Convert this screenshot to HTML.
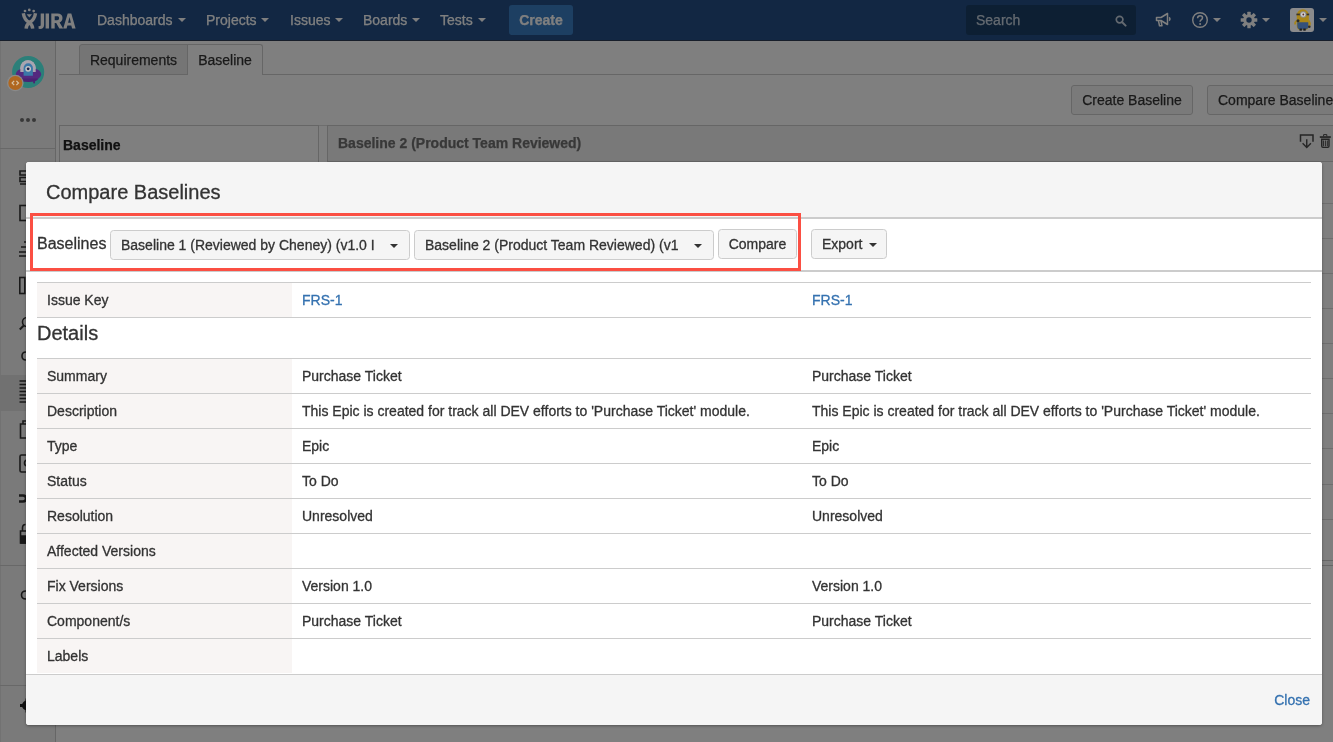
<!DOCTYPE html>
<html>
<head>
<meta charset="utf-8">
<title>Compare Baselines</title>
<style>
*{box-sizing:border-box;margin:0;padding:0}
html,body{width:1333px;height:742px;overflow:hidden;background:#fff;font-family:"Liberation Sans",sans-serif;font-size:14px;color:#333}
#page{position:absolute;left:0;top:0;width:1333px;height:742px;overflow:hidden;background:#fff}
/* ---------- top nav ---------- */
#nav{-webkit-text-stroke:.25px;will-change:transform;position:absolute;left:0;top:0;width:1333px;height:41px;background:#244f86;border-bottom:1px solid #2e3d54}
#nav .item{position:absolute;top:0;height:40px;line-height:40px;color:#fff;font-size:14px;white-space:nowrap}
#nav .caret{position:absolute;top:18px;width:0;height:0;border-left:4px solid transparent;border-right:4px solid transparent;border-top:4px solid #fff}
#create{position:absolute;left:509px;top:5px;width:64px;height:30px;border-radius:3px;background:#3b7fc4;color:#fff;font-weight:bold;font-size:14px;line-height:30px;text-align:center}
#search{position:absolute;left:966px;top:5px;width:170px;height:30px;border-radius:3px;background:#1a3f66;color:#c8d3e0;font-size:14px;line-height:30px;padding-left:10px}
/* ---------- sidebar ---------- */
#side{will-change:transform;position:absolute;left:0;top:41px;width:56px;height:701px;background:#f5f5f5;border-right:1px solid #ccc}
/* ---------- content ---------- */
#content{-webkit-text-stroke:.25px;will-change:transform;position:absolute;left:56px;top:41px;width:1277px;height:701px;background:#fff;z-index:0;overflow:hidden}

#side .dot{position:absolute;top:77px;width:4px;height:4px;border-radius:2px;background:#707070}
#side .sline{position:absolute;left:0;width:55px;height:1px;background:#d0d0d0}
#side .ssel{position:absolute;left:0;top:334px;width:55px;height:36px;background:#e2e2e2}
#content .tab{position:absolute;border:1px solid #ccc;font-size:14px;line-height:30px;text-align:center;color:#333;white-space:nowrap}
#content .bbtn{position:absolute;top:44px;height:30px;border:1px solid #ccc;border-radius:3px;background:#f5f5f5;font-size:14px;line-height:28px;text-align:center;color:#333;white-space:nowrap}
#lpanel{position:absolute;left:3px;top:84px;width:260px;height:441px;border:1px solid #ccc;background:#fff}
#rpanel{position:absolute;left:271px;top:84px;width:1010px;height:441px;border:1px solid #ccc;background:#fff;
  background-image:linear-gradient(#ddd,#ddd),linear-gradient(#ddd,#ddd),linear-gradient(#ddd,#ddd),linear-gradient(#ddd,#ddd),linear-gradient(#ddd,#ddd),linear-gradient(#ddd,#ddd),linear-gradient(#ddd,#ddd),linear-gradient(#ddd,#ddd),linear-gradient(#ddd,#ddd),linear-gradient(#ddd,#ddd),linear-gradient(#ccc,#ccc),linear-gradient(#ccc,#ccc);
  background-repeat:no-repeat;background-size:100% 1px;
  background-position:0 77px,0 112px,0 147px,0 182px,0 217px,0 252px,0 287px,0 322px,0 358px,0 393px,0 434px,0 439px}
#rhead{position:absolute;left:0;top:0;width:1008px;height:36px;background:#f2f2f2;border-bottom:1px solid #ccc}
/* ---------- blanket ---------- */
#blanket{z-index:5;position:absolute;left:0;top:0;width:1333px;height:742px;background:rgba(0,0,0,.5)}
/* ---------- dialog ---------- */
#dlg{-webkit-text-stroke:.3px;will-change:transform;z-index:6;position:absolute;left:26px;top:162px;width:1296px;height:563px;background:#fff;border-radius:3px;overflow:hidden;box-shadow:0 1px 3px rgba(0,0,0,.35)}
#dlg .hd{position:absolute;left:0;top:0;width:100%;height:57px;background:#f5f5f5;border-bottom:2px solid #ccc}
#dlg .hd h2{position:absolute;left:20px;top:16px;font-size:20px;font-weight:normal;color:#333;line-height:28px}
#dlg .ft{position:absolute;left:0;top:512px;width:100%;height:51px;background:#f5f5f5;border-top:1px solid #ccc}

#dlg .tb{position:absolute;left:0;top:57px;width:100%;height:53px;background:#fff;border-bottom:2px solid #ccc}
#dlg .lbl{position:absolute;left:11px;top:15px;font-size:16px;line-height:20px;color:#333}
#dlg .sel,#dlg .btn{position:absolute;top:11px;height:30px;border:1px solid #ccc;border-radius:3.5px;background:#f5f5f5;font-size:14px;line-height:28px;color:#333;white-space:nowrap;overflow:hidden}
#dlg .sel{width:300px;padding-left:10px}
#dlg .btn{text-align:center;top:10px}
#dlg .sel i{position:absolute;left:279px;top:13px;width:0;height:0;border-left:4px solid transparent;border-right:4px solid transparent;border-top:4px solid #333}
#dlg .btn i{position:absolute;left:57px;top:13px;width:0;height:0;border-left:4px solid transparent;border-right:4px solid transparent;border-top:4px solid #333}
#dlg .red{position:absolute;left:4px;top:51px;width:771px;height:58px;border:3px solid #fb4f43}
#dlg .row{position:absolute;left:11px;width:1274px;height:35px;border-bottom:1px solid #ccc;font-size:14px;line-height:34px;color:#333;white-space:nowrap}
#dlg .row.first{height:36px;border-top:1px solid #ccc}
#dlg .row .k{position:absolute;left:0;top:0;width:255px;height:34px;background:#f8f5f4;padding-left:10px}
#dlg .row .v{position:absolute;top:0;height:34px;width:509px;padding-left:10px}
#dlg .row .v:nth-child(2){left:255px}
#dlg .row .v:nth-child(3){left:765px}
#dlg .row .a{color:#3572b0}
#dlg .row.last{border-bottom:0}
#dlg .h3{position:absolute;left:11px;top:158px;font-size:20px;line-height:26px;color:#333}
#dlg .ft span{position:absolute;right:12px;top:16px;font-size:14px;line-height:18px;color:#3572b0}
</style>
</head>
<body>
<div id="page">
  <div id="nav">
    <svg id="logo" width="90" height="41" viewBox="0 0 90 41" style="position:absolute;left:0;top:0">
      <g fill="#fff">
        <circle cx="25" cy="11" r="1.35"/><circle cx="29.3" cy="9.9" r="1.35"/><circle cx="33.7" cy="11.1" r="1.35"/>
        <path d="M26.6 14.2h5.4l-2.7 3.3z"/>
        <path d="M40.7 13.5h3.4v11.2c0 2.8-1.5 4.2-4.2 4.2-.5 0-.9 0-1.3-.1v-2.7c.3.1.6.1.9.1.9 0 1.2-.5 1.2-1.6z"/>
        <path d="M45.6 13.5h3.4v15h-3.4z"/>
        <path fill-rule="evenodd" d="M51.3 13.5h6.2c3.2 0 5 1.6 5 4.6 0 2.2-1.1 3.7-2.9 4.3l3.6 6.1h-3.9l-3.1-5.6h-1.5v5.6h-3.4zM54.7 16.3v3.9h2.4c1.3 0 2-.7 2-2s-.7-1.9-2-1.9z"/>
        <path fill-rule="evenodd" d="M67.7 13.5h3.6l4.3 15h-3.5l-.8-3.1h-3.9l-.8 3.1h-3.4zM69.5 17l-1.4 5.7h2.8z"/>
      </g>
      <g fill="none" stroke="#fff" stroke-width="3.4">
        <path d="M23.3 13.3Q24.3 20 29.4 22.6Q32.6 25 32.7 28.6"/>
        <path d="M35.5 13.3Q34.5 20 29.4 22.6Q26.2 25 26.1 28.6"/>
      </g>
    </svg>
    <div class="item" style="left:97px">Dashboards</div><div class="caret" style="left:178px"></div>
    <div class="item" style="left:206px">Projects</div><div class="caret" style="left:261px"></div>
    <div class="item" style="left:290px">Issues</div><div class="caret" style="left:335px"></div>
    <div class="item" style="left:363px">Boards</div><div class="caret" style="left:412px"></div>
    <div class="item" style="left:440px">Tests</div><div class="caret" style="left:478px"></div>
    <div id="create">Create</div>
    <div id="search">Search
      <svg width="12" height="12" viewBox="0 0 12 12" style="position:absolute;left:149px;top:10px"><circle cx="4.6" cy="4.6" r="3.3" fill="none" stroke="#c8d3e0" stroke-width="1.7"/><path d="M7.2 7.2L10.6 10.6" stroke="#c8d3e0" stroke-width="2" stroke-linecap="round"/></svg>
    </div>
    <!-- megaphone -->
    <svg width="18" height="18" viewBox="0 0 18 18" style="position:absolute;left:1155px;top:11px"><g fill="none" stroke="#fff" stroke-width="1.5" stroke-linejoin="round"><path d="M1.5 6.5h4.5l6.5-4v11l-6.500-4h-4.500z"/><path d="M3.500 9.800l1 5h2.500l-1-5"/><path d="M14.300 6.200q1.400 1.800 0 3.600"/></g></svg>
    <!-- help -->
    <svg width="18" height="18" viewBox="0 0 18 18" style="position:absolute;left:1191px;top:11px"><circle cx="9" cy="9" r="7.300" fill="none" stroke="#fff" stroke-width="1.400"/><path d="M6.600 7.200q0-2.500 2.500-2.500q2.400 0 2.400 2.100q0 1.200-1.300 2q-1.100.700-1.100 1.900" fill="none" stroke="#fff" stroke-width="1.500"/><circle cx="9.100" cy="13" r="1" fill="#fff"/></svg>
    <div class="caret" style="left:1213px"></div>
    <!-- gear -->
    <svg width="18" height="18" viewBox="-9 -9 18 18" style="position:absolute;left:1240px;top:11px"><g fill="#fff"><rect x="-1.700" y="-8.300" width="3.400" height="16.600" rx=".5"/><rect x="-1.700" y="-8.300" width="3.400" height="16.600" rx=".5" transform="rotate(45)"/><rect x="-1.700" y="-8.300" width="3.400" height="16.600" rx=".5" transform="rotate(90)"/><rect x="-1.700" y="-8.300" width="3.400" height="16.600" rx=".5" transform="rotate(135)"/><circle r="5.800"/></g><circle r="2.700" fill="#244f86"/></svg>
    <div class="caret" style="left:1262px"></div>
    <!-- avatar drawn above blanket -->
    <div class="caret" style="left:1319px"></div>
  </div>
  <div id="side">
    <div style="position:absolute;left:0;top:0;width:1px;height:701px;background:#e4e4e4"></div>
    <!-- project avatar drawn above blanket -->
    <div class="dot" style="left:20px"></div><div class="dot" style="left:26px"></div><div class="dot" style="left:32px"></div>
    <div class="sline" style="top:107px"></div>
    <div class="ssel"></div>
    <div class="sline" style="top:524px"></div>
    <div class="sline" style="top:644px"></div>
    <svg id="sicons" width="56" height="701" viewBox="0 41 56 701" style="position:absolute;left:0;top:0">
      <g fill="none" stroke="#333" stroke-width="1.600">
        <!-- tree -->
        <path d="M20 171h8v4h-8zM20 177.500h8v4h-8zM20 184h8v-4"/>
        <!-- page -->
        <rect x="20" y="205.500" width="12" height="15"/>
        <!-- ship -->
        <path d="M19 252h16M21 247h12v5M24 242h6v5M19 256h16"/>
        <!-- board -->
        <rect x="19.800" y="277.500" width="5" height="16"/><rect x="27.800" y="277.500" width="5" height="10"/>
        <!-- search -->
        <circle cx="27" cy="322" r="4.500"/><path d="M23.800 325.500l-4 4" stroke-width="2"/>
        <!-- link -->
        <path d="M26 352q-4 0 -4 4t4 4"/>
        <!-- list (selected) -->
        <path d="M19.500 381h12M19.500 384.500h12M19.500 388h12M19.500 391.500h12M19.500 395h12M19.500 398.500h12M19.500 402h12" stroke-width="1.300"/>
        <!-- clip -->
        <path d="M20.500 424h10v14h-10zM23 424v-3h5v3"/>
        <!-- calendar -->
        <rect x="20" y="455" width="13" height="17" rx="1.500"/><circle cx="27.500" cy="463" r="3"/>
        <!-- shuffle -->
        <path d="M19 495.500h4q3 0 3 3v0q0 3 -3 3h-4" stroke-width="2.400"/>
        <!-- lock -->
        <path d="M20.500 531h10v12h-10zM22.500 531v-3q0 -3.500 3 -3.500"/>
        <path d="M21 536h9v7h-9z" fill="#333"/>
        <!-- add shortcut -->
        <path d="M26 591q-4.500 0 -4.500 4t4.500 4"/>
      </g>
      <!-- gear -->
      <g fill="#222"><circle cx="27" cy="705.500" r="5"/><rect x="25.500" y="698.500" width="3" height="14"/><rect x="20" y="704" width="14" height="3"/></g>
    </svg>
  </div>
  <div id="content">
    <div class="tab" style="left:23px;top:3px;width:109px;height:31px;background:#ebebeb;border-radius:3px 0 0 0">Requirements</div>
    <div class="tab" style="left:131px;top:3px;width:76px;height:31px;background:#fff;border-bottom:0;border-radius:0 3px 0 0;z-index:2">Baseline</div>
    <div style="position:absolute;left:3px;top:33px;width:1274px;height:1px;background:#ccc"></div>
    <div class="bbtn" style="left:1015px;width:122px">Create Baseline</div>
    <div class="bbtn" style="left:1151px;width:140px;text-align:left;padding-left:10px">Compare Baseline</div>
    <div style="position:absolute;left:3px;top:84px;width:1274px;height:1px;background:#ddd"></div>
    <div id="lpanel"><div style="position:absolute;left:3px;top:11px;font-weight:bold;font-size:14px;line-height:16px;color:#222">Baseline</div></div>
    <div id="rpanel">
      <div id="rhead"><span style="position:absolute;left:10px;top:9px;font-weight:bold;font-size:14px;line-height:16px;color:#707070;white-space:nowrap">Baseline 2 (Product Team Reviewed)</span>
        <svg width="36" height="18" viewBox="0 0 36 18" style="position:absolute;left:970px;top:7px"><g fill="none" stroke="#4a4a4a"><path d="M2.500 8.800V2H15V8.800" stroke-width="1.500"/><path d="M8.750 6.200V14M4.600 10.300l4.150 4.100l4.150 -4.100" stroke-width="1.400"/><path d="M25.600 3.400V1.600h3.200V3.400" stroke-width="1"/><path d="M23.700 6.300h7.300v6.800q0 1.300 -1.300 1.300h-4.700q-1.300 0 -1.300 -1.300z" stroke-width="1.400"/><path d="M25.400 7.500v5.800M27.350 7.500v5.800M29.300 7.500v5.800" stroke-width="1"/></g><rect x="21.800" y="3.200" width="11" height="1.700" fill="#4a4a4a"/></svg>
      </div>
    </div>
  </div>
  <div id="blanket"></div>
  <!-- project avatar (direct colours) : svg origin = page (4,50) -->
  <svg width="48" height="46" viewBox="4 50 48 46" style="position:absolute;left:4px;top:50px;z-index:5">
    <circle cx="28.150" cy="72" r="16.050" fill="#2b7f79"/>
    <path d="M20.300 76V67.900a7.700 7.700 0 0 1 15.400 0V76z" fill="#a9a5b0"/>
    <ellipse cx="28.450" cy="74.300" rx="12.700" ry="6.700" fill="#54297f"/>
    <path d="M18.500 78.500h20q-1.500 3.600 -10 3.600t-10 -3.600z" fill="#4a2273"/>
    <rect x="33.200" y="80" width="1.800" height="3.500" rx=".8" fill="#4a2273"/>
    <path d="M20.300 72V67.900a7.700 7.700 0 0 1 15.400 0V72z" fill="#a9a5b0"/>
    <path d="M23.600 75.800V68a4.650 4.650 0 0 1 9.300 0v7.800z" fill="#3b78a8"/>
    <circle cx="28.150" cy="68.800" r="2.900" fill="#c4c4c4"/>
    <circle cx="28.150" cy="68.800" r="1.400" fill="#1b2350"/>
    <circle cx="15.300" cy="83" r="8.300" fill="#8a8a8a"/>
    <circle cx="15.300" cy="83" r="7" fill="#b0671f"/>
    <path d="M14.200 80.900l-2.100 2.100l2.100 2.100M16.400 80.900l2.100 2.100l-2.100 2.100" fill="none" stroke="#d8c4a6" stroke-width="1.200"/>
  </svg>
  <!-- user avatar (direct colours) : svg origin = page (1290,8) -->
  <svg width="24" height="24" viewBox="0 0 24 24" style="position:absolute;left:1290px;top:8px;z-index:5">
    <rect width="24" height="24" rx="3" fill="#8b8b8c"/>
    <path d="M6.800 18V7.300a6 6 0 0 1 12 0V18q0 4 -4 4h-4q-4 0 -4 -4z" fill="#a98618"/>
    <path d="M7.300 14.200h11V18q0 3.600 -3.600 3.600h-3.800q-3.600 0 -3.600 -3.600z" fill="#34517a"/>
    <rect x="6.400" y="5.600" width="12.800" height="1.700" fill="#3a3428"/>
    <circle cx="13.200" cy="6.500" r="3.300" fill="#8d8d8d"/>
    <circle cx="13.200" cy="6.500" r="2.300" fill="#d2d2d2"/>
    <circle cx="13.300" cy="6.500" r=".900" fill="#5a2a22"/>
    <path d="M6.800 12.500q-2 1.500 -1.800 4M18.800 12.500q1.500 2 1 5" fill="none" stroke="#a98618" stroke-width="1.700"/>
    <circle cx="8" cy="12.700" r="1.500" fill="#2a2a2a"/><circle cx="19.300" cy="18.800" r="1.300" fill="#2a2a2a"/>
    <rect x="9.500" y="20.500" width="2.400" height="2.200" fill="#1c1c1c"/><rect x="13.300" y="20.500" width="2.400" height="2.200" fill="#1c1c1c"/>
  </svg>
  <div id="dlg">
    <div class="hd"><h2>Compare Baselines</h2></div>
    <div class="tb">
      <div class="lbl">Baselines</div>
      <div class="sel" style="left:84px">Baseline 1 (Reviewed by Cheney) (v1.0 I<i></i></div>
      <div class="sel" style="left:388px">Baseline 2 (Product Team Reviewed) (v1<i></i></div>
      <div class="btn" style="left:692px;width:79px">Compare</div>
      <div class="btn" style="left:785px;width:76px;text-align:left;padding-left:10px">Export<i></i></div>
    </div>
    <div class="red"></div>
    <div class="row first" style="top:120px"><div class="k">Issue Key</div><div class="v a">FRS-1</div><div class="v a">FRS-1</div></div>
    <div class="h3">Details</div>
    <div class="row first" style="top:196px"><div class="k">Summary</div><div class="v">Purchase Ticket</div><div class="v">Purchase Ticket</div></div>
    <div class="row" style="top:232px"><div class="k">Description</div><div class="v">This Epic is created for track all DEV efforts to 'Purchase Ticket' module.</div><div class="v">This Epic is created for track all DEV efforts to 'Purchase Ticket' module.</div></div>
    <div class="row" style="top:267px"><div class="k">Type</div><div class="v">Epic</div><div class="v">Epic</div></div>
    <div class="row" style="top:302px"><div class="k">Status</div><div class="v">To Do</div><div class="v">To Do</div></div>
    <div class="row" style="top:337px"><div class="k">Resolution</div><div class="v">Unresolved</div><div class="v">Unresolved</div></div>
    <div class="row" style="top:372px"><div class="k">Affected Versions</div><div class="v"></div><div class="v"></div></div>
    <div class="row" style="top:407px"><div class="k">Fix Versions</div><div class="v">Version 1.0</div><div class="v">Version 1.0</div></div>
    <div class="row" style="top:442px"><div class="k">Component/s</div><div class="v">Purchase Ticket</div><div class="v">Purchase Ticket</div></div>
    <div class="row last" style="top:477px"><div class="k">Labels</div><div class="v"></div><div class="v"></div></div>
    <div class="ft"><span>Close</span></div>
  </div>
</div>
</body>
</html>
